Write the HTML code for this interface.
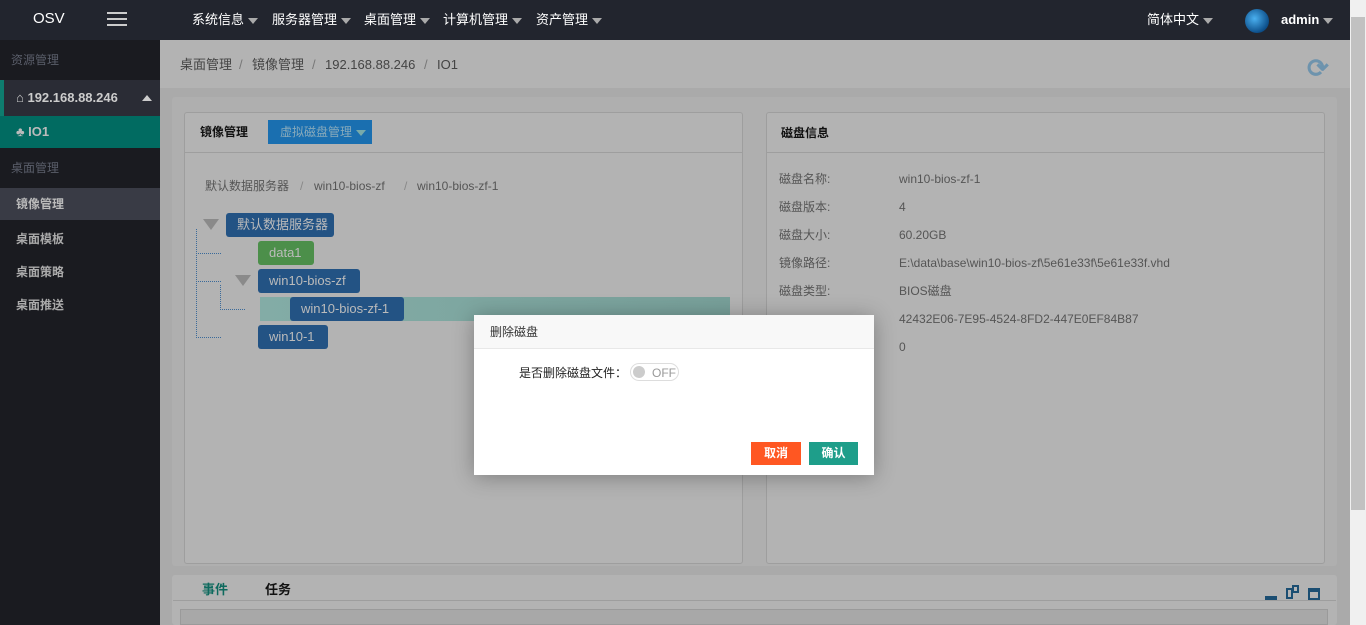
<!DOCTYPE html>
<html><head><meta charset="utf-8"><style>
*{margin:0;padding:0;box-sizing:border-box}
body{width:1366px;height:625px;overflow:hidden;position:relative;background:#b3b3b3;font-family:"Liberation Sans","Noto Sans CJK SC",sans-serif;font-size:13px;line-height:16px;color:#222}
.a{position:absolute}
.hd{left:0;top:0;width:1350px;height:40px;background:#22252e;color:#fff}
.hd .n{position:absolute;top:12px;white-space:nowrap;font-size:13px}
.tri{display:inline-block;width:0;height:0;border-left:5px solid transparent;border-right:5px solid transparent;border-top:6px solid #aaa;vertical-align:middle;margin-left:4px}
.sb{left:0;top:40px;width:160px;height:585px;background:#1a1b20;color:#777}
.sb div{position:absolute;left:0;width:160px}
.card{background:#b3b3b3;border:1px solid #9e9e9e;border-radius:3px}
.node{position:absolute;background:#235384;color:#bbb;height:24px;line-height:24px;padding:0 11px;border-radius:3px;font-size:13px;white-space:nowrap}
.dl{position:absolute;border-left:1px dotted #3a6a9a}
.dh{position:absolute;border-top:1px dotted #3a6a9a}
.ttri{position:absolute;width:0;height:0;border-left:8px solid transparent;border-right:8px solid transparent;border-top:11px solid #8a8a8a}
.lbl{position:absolute;left:779px;color:#555;font-size:12px}
.val{position:absolute;left:899px;color:#555;font-size:12px}
</style></head><body>
<div class="a hd">
 <div class="a" style="left:33px;top:11px;font-size:15px">OSV</div>
 <div class="a" style="left:107px;top:12px;width:20px;height:2px;background:#ccc;box-shadow:0 6px 0 #ccc,0 12px 0 #ccc"></div>
 <div class="n" style="left:192px">系统信息<span class="tri"></span></div>
 <div class="n" style="left:272px">服务器管理<span class="tri"></span></div>
 <div class="n" style="left:364px">桌面管理<span class="tri"></span></div>
 <div class="n" style="left:443px">计算机管理<span class="tri"></span></div>
 <div class="n" style="left:536px">资产管理<span class="tri"></span></div>
 <div class="n" style="left:1147px">简体中文<span class="tri"></span></div>
 <div class="a" style="left:1245px;top:9px;width:24px;height:24px;border-radius:50%;background:radial-gradient(circle at 40% 40%,#4ab0f0,#0d4f8a 70%,#0a2f55)"></div>
 <div class="n" style="left:1281px;font-weight:bold">admin<span class="tri"></span></div>
</div>
<div class="a sb">
 <div style="top:0;height:40px;line-height:40px;padding-left:11px;font-size:12px;color:#5a5e6a">资源管理</div>
 <div style="top:40px;height:36px;line-height:36px;background:#2a2c35;border-left:4px solid #0e7c6e;padding-left:12px;color:#ccc;font-weight:bold;font-size:13px">⌂ 192.168.88.246<span style="position:absolute;right:8px;top:15px;border-left:5px solid transparent;border-right:5px solid transparent;border-bottom:6px solid #ccc;width:0;height:0"></span></div>
 <div style="top:76px;height:32px;line-height:32px;background:#016b61;padding-left:16px;color:#bbb;font-weight:bold">♣ IO1</div>
 <div style="top:108px;height:40px;line-height:40px;padding-left:11px;font-size:12px;color:#5a5e6a">桌面管理</div>
 <div style="top:148px;height:32px;line-height:32px;background:#393b45;padding-left:16px;color:#bbb;font-weight:bold;font-size:12px">镜像管理</div>
 <div style="top:183px;height:32px;line-height:32px;padding-left:16px;color:#aaa;font-weight:bold;font-size:12px">桌面模板</div>
 <div style="top:216px;height:32px;line-height:32px;padding-left:16px;color:#aaa;font-weight:bold;font-size:12px">桌面策略</div>
 <div style="top:249px;height:32px;line-height:32px;padding-left:16px;color:#aaa;font-weight:bold;font-size:12px">桌面推送</div>
</div>
<div class="a" style="left:180px;top:57px;color:#444;font-size:13px;white-space:nowrap">桌面管理</div>
<div class="a" style="left:239px;top:57px;color:#777">/</div>
<div class="a" style="left:252px;top:57px;color:#444">镜像管理</div>
<div class="a" style="left:312px;top:57px;color:#777">/</div>
<div class="a" style="left:325px;top:57px;color:#444">192.168.88.246</div>
<div class="a" style="left:424px;top:57px;color:#777">/</div>
<div class="a" style="left:437px;top:57px;color:#444">IO1</div>
<div class="a" style="left:1307px;top:55px;color:#6d93ad;font-size:26px;line-height:26px;font-weight:bold">⟳</div>
<div class="a" style="left:160px;top:88px;width:1190px;height:537px;background:#aaaaaa"></div>
<div class="a" style="left:172px;top:97px;width:1165px;height:469px;background:#afafaf;border-radius:3px"></div>
<div class="a card" style="left:184px;top:112px;width:559px;height:452px"></div>
<div class="a" style="left:185px;top:152px;width:557px;border-top:1px solid #9e9e9e"></div>
<div class="a" style="left:200px;top:124px;font-weight:bold;font-size:12px;color:#111">镜像管理</div>
<div class="a" style="left:268px;top:120px;width:104px;height:24px;background:#1a6fb0;color:#8ab;line-height:24px;padding-left:12px;font-size:12px">虚拟磁盘管理<span class="tri" style="border-top-color:#7aa"></span></div>
<div class="a" style="left:205px;top:178px;color:#555;font-size:12px;white-space:nowrap">默认数据服务器</div>
<div class="a" style="left:300px;top:178px;color:#888;font-size:12px">/</div>
<div class="a" style="left:314px;top:178px;color:#555;font-size:12px">win10-bios-zf</div>
<div class="a" style="left:404px;top:178px;color:#888;font-size:12px">/</div>
<div class="a" style="left:417px;top:178px;color:#555;font-size:12px">win10-bios-zf-1</div>
<div class="ttri" style="left:203px;top:219px"></div>
<div class="dl" style="left:196px;top:229px;height:109px"></div>
<div class="dh" style="left:196px;top:253px;width:25px"></div>
<div class="dh" style="left:196px;top:281px;width:25px"></div>
<div class="dh" style="left:196px;top:337px;width:25px"></div>
<div class="ttri" style="left:235px;top:275px"></div>
<div class="dl" style="left:220px;top:285px;height:25px"></div>
<div class="dh" style="left:220px;top:309px;width:25px"></div>
<div class="node" style="left:226px;top:213px;width:108px">默认数据服务器</div>
<div class="node" style="left:258px;top:241px;background:#4c8f4a;width:56px">data1</div>
<div class="node" style="left:258px;top:269px;width:102px">win10-bios-zf</div>
<div class="a" style="left:260px;top:297px;width:470px;height:24px;background:linear-gradient(90deg,#83aca6,#78a09a)"></div>
<div class="node" style="left:290px;top:297px;width:114px">win10-bios-zf-1</div>
<div class="node" style="left:258px;top:325px;width:70px">win10-1</div>
<div class="a card" style="left:766px;top:112px;width:559px;height:452px"></div>
<div class="a" style="left:767px;top:152px;width:557px;border-top:1px solid #9e9e9e"></div>
<div class="a" style="left:781px;top:125px;font-weight:bold;font-size:12px;color:#111">磁盘信息</div>
<div class="lbl" style="top:171px">磁盘名称:</div><div class="val" style="top:171px">win10-bios-zf-1</div>
<div class="lbl" style="top:199px">磁盘版本:</div><div class="val" style="top:199px">4</div>
<div class="lbl" style="top:227px">磁盘大小:</div><div class="val" style="top:227px">60.20GB</div>
<div class="lbl" style="top:255px">镜像路径:</div><div class="val" style="top:255px">E:\data\base\win10-bios-zf\5e61e33f\5e61e33f.vhd</div>
<div class="lbl" style="top:283px">磁盘类型:</div><div class="val" style="top:283px">BIOS磁盘</div>
<div class="val" style="top:311px">42432E06-7E95-4524-8FD2-447E0EF84B87</div>
<div class="val" style="top:339px">0</div>
<div class="a" style="left:172px;top:575px;width:1165px;height:50px;background:#b3b3b3;border-radius:3px"></div>
<div class="a" style="left:173px;top:600px;width:1163px;border-top:1px solid #9e9e9e"></div>
<div class="a" style="left:202px;top:582px;color:#0e6a5e;font-weight:bold;font-size:13px">事件</div>
<div class="a" style="left:265px;top:582px;color:#111;font-weight:bold;font-size:13px">任务</div>
<div class="a" style="left:1265px;top:596px;width:12px;height:4px;background:#1b4e72"></div>
<div class="a" style="left:1286px;top:588px;width:7px;height:11px;border:2px solid #1b4e72"></div>
<div class="a" style="left:1292px;top:585px;width:7px;height:8px;border:2px solid #1b4e72"></div>
<div class="a" style="left:1308px;top:588px;width:12px;height:12px;border:2px solid #1b4e72;border-top-width:4px"></div>
<div class="a" style="left:180px;top:609px;width:1148px;height:16px;background:#a8a8a8;border:1px solid #9a9a9a"></div>
<div class="a" style="left:1350px;top:0;width:16px;height:625px;background:#f0f0f0"></div>
<div class="a" style="left:1351px;top:17px;width:14px;height:493px;background:#c1c1c1"></div>
<div class="a" style="left:474px;top:315px;width:400px;height:160px;background:#fff;box-shadow:0 2px 20px rgba(0,0,0,.3)"></div>
<div class="a" style="left:474px;top:315px;width:400px;height:34px;background:#f8f8f8;border-bottom:1px solid #e8e8e8"></div>
<div class="a" style="left:490px;top:324px;font-size:12px;color:#333">删除磁盘</div>
<div class="a" style="left:519px;top:365px;font-size:12px;color:#222">是否删除磁盘文件：</div>
<div class="a" style="left:630px;top:363px;width:49px;height:18px;border:1px solid #ddd;border-radius:9px"></div>
<div class="a" style="left:633px;top:366px;width:12px;height:12px;border-radius:50%;background:#ccc"></div>
<div class="a" style="left:652px;top:365px;font-size:12px;color:#999">OFF</div>
<div class="a" style="left:751px;top:442px;width:50px;height:23px;background:#ff5722;color:#fff;text-align:center;line-height:23px;font-size:12px;font-weight:bold">取消</div>
<div class="a" style="left:809px;top:442px;width:49px;height:23px;background:#1e9e8a;color:#fff;text-align:center;line-height:23px;font-size:12px;font-weight:bold">确认</div>
</body></html>
